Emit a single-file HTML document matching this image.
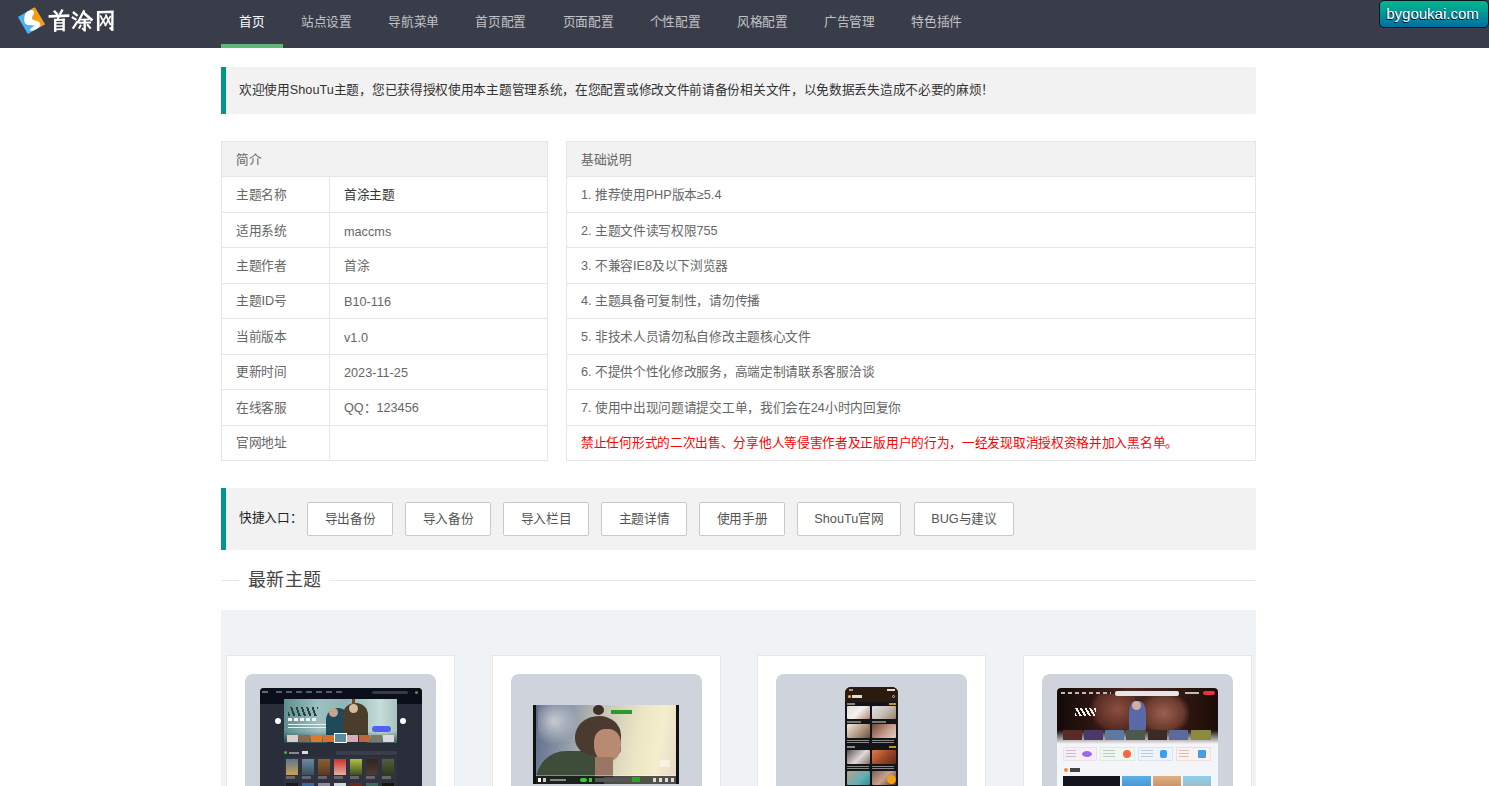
<!DOCTYPE html>
<html lang="zh-CN"><head><meta charset="utf-8">
<style>
*{margin:0;padding:0;box-sizing:border-box}
html,body{width:1489px;height:786px;overflow:hidden;background:#fff;font-family:"Liberation Sans",sans-serif;color:#666;font-size:12.7px;letter-spacing:-0.3px}
i{font-style:normal;letter-spacing:0}
.hd{position:absolute;left:0;top:0;width:1489px;height:48px;background:#393d49}
.logo{position:absolute;left:14px;top:4px;width:36px;height:34px}
.logotxt{position:absolute;left:46px;top:6px;width:72px;height:30px}
.nav{position:absolute;left:221px;top:0;height:48px;display:flex}
.nav a{display:block;padding:0 18.2px;line-height:44px;height:48px;color:rgba(255,255,255,.7);text-decoration:none;font-size:12.7px;position:relative}
.nav a.on{color:#fff}
.nav a.on:after{content:"";position:absolute;left:0;right:0;bottom:0;height:4px;background:#5fb878}
.badge{position:absolute;left:1379px;top:0;width:110px;height:28px;border:1px solid #06121e;border-radius:5px;background:linear-gradient(#00b88c,#006fa2);color:#fff;font-size:15px;line-height:25px;text-align:center;padding-right:3px;text-shadow:-0.5px 0.5px 0.5px #002}
.quote{position:absolute;left:221px;top:67px;width:1035px;height:47px;background:#f2f2f2;border-left:5px solid #009688;border-radius:0 2px 2px 0;padding-left:13px;line-height:46px;color:#333;font-size:12.7px}
table{position:absolute;border-collapse:collapse;font-size:12.7px}
td{border:1px solid #e6e6e6;height:35.44px;padding:0 0 2px 14px;color:#666}
tr.th td{background:#f2f2f2}
td.lt{padding-top:3px;padding-bottom:0}
.t1{left:221px;top:141px;width:327px}
.t2{left:566px;top:141px;width:690px}
.red{color:#f00 !important}
.quick{position:absolute;left:221px;top:488px;width:1035px;height:62px;background:#f2f2f2;border-left:5px solid #009688;border-radius:0 2px 2px 0}
.quick .lbl{position:absolute;left:13px;top:0;line-height:61px;color:#222;font-size:12.7px}
.btn{position:absolute;top:14px;height:34px;border:1px solid #c9c9c9;background:#fff;border-radius:2px;color:#555;text-align:center;line-height:32px;font-size:12.7px}
.fs{position:absolute;left:221px;top:580px;width:1035px;height:30px;border-top:1px solid #e6e6e6;border-radius:2px}
.fs span{position:absolute;left:18px;top:-12px;background:#fff;padding:0 8px 0 9px;font-size:18px;letter-spacing:0.4px;color:#444;line-height:22px}
.box{position:absolute;left:221px;top:610px;width:1035px;height:200px;background:#f0f3f6}
.card{position:absolute;top:45px;width:229px;height:200px;background:#fff;border:1px solid #e8e8e8}
.img{position:absolute;left:18px;top:18px;width:191px;height:160px;background:#cfd3db;border-radius:8px;overflow:hidden}

.img div{position:absolute}
.sc1{left:15px;top:14px;width:162px;height:120px;background:#2a2d3a;border-radius:4px 4px 0 0;overflow:hidden}
.sc1 .tb{left:0;top:0;width:162px;height:16px;background:#0b0e1b}
.sc1 .bn{left:24px;top:11px;width:113px;height:44px;background:linear-gradient(90deg,#5c8a8e 0%,#7fa9ab 18%,#2d5563 40%,#3f5a5a 55%,#8fb5b3 75%,#c3d9d6 100%)}
.p{width:12px;height:16px;top:71px}
.img>div>div{filter:blur(0.7px)}
.sc2{left:22px;top:31px;width:146px;height:79px;background:#111;overflow:hidden}
.sc3{left:69px;top:13px;width:53px;height:120px;background:#131418;border-radius:6px 6px 0 0;overflow:hidden}
.sc4{left:15px;top:14px;width:161px;height:120px;background:#f4f5f8;border-radius:4px 4px 0 0;overflow:hidden}
</style></head><body>
<div class="hd">
  <svg class="logo" viewBox="0 0 832 786"><defs><clipPath id="dm"><polygon points="480,75 715,470 320,695 90,300"/></clipPath></defs><g clip-path="url(#dm)"><rect width="832" height="786" fill="#4cb1f5"/><polygon points="360,120 520,40 760,470 600,560 560,420 420,360 440,200" fill="#ff9b08"/><path d="M270 200 C 300 160, 350 140, 400 140 C 450 140, 478 170, 462 215 C 445 260, 405 310, 420 345 C 440 375, 520 380, 570 405 C 620 440, 625 510, 560 560 C 510 595, 440 625, 390 615 C 355 605, 365 580, 400 555 C 440 530, 480 505, 470 495 C 430 488, 330 500, 270 460 C 225 420, 225 300, 270 200 Z" fill="#fff"/></g></svg>
  <svg class="logotxt" viewBox="0 0 1489 620" fill="none" stroke="#fff" stroke-linecap="square"><g stroke-width="49">
<path d="M180 115 L225 165"/><path d="M330 95 L295 160"/>
<path d="M80 215 L455 200" stroke-width="55"/>
<path d="M255 245 L235 285" stroke-width="41"/>
<path d="M190 290 L190 510"/><path d="M365 285 L365 500"/><path d="M190 290 L365 285" stroke-width="41"/>
<path d="M215 350 L340 350" stroke-width="31"/><path d="M215 415 L340 415" stroke-width="31"/><path d="M215 485 L340 480" stroke-width="36"/>
<path d="M575 140 L635 190"/><path d="M555 240 L610 275" stroke-width="46"/><path d="M565 450 L640 335" stroke-width="46"/>
<path d="M780 110 L670 320" stroke-width="46"/><path d="M790 150 L940 280" stroke-width="54"/>
<path d="M720 280 L880 275" stroke-width="36"/><path d="M690 345 L910 340" stroke-width="41"/>
<path d="M800 300 L800 500" stroke-width="49"/><path d="M800 500 L760 470" stroke-width="36"/>
<path d="M715 405 L690 450" stroke-width="41"/><path d="M865 395 L910 450" stroke-width="46"/>
<path d="M1080 130 L1080 490" stroke-width="54"/><path d="M1080 130 L1375 120 L1370 490" stroke-width="49"/><path d="M1370 490 L1330 460" stroke-width="41"/>
<path d="M1130 210 L1230 390" stroke-width="36"/><path d="M1230 230 L1125 400" stroke-width="36"/>
<path d="M1240 190 L1330 380" stroke-width="36"/><path d="M1330 220 L1230 400" stroke-width="36"/>
</g></svg>
  <div class="nav">
    <a class="on">首页</a><a>站点设置</a><a>导航菜单</a><a>首页配置</a><a>页面配置</a><a>个性配置</a><a>风格配置</a><a>广告管理</a><a>特色插件</a>
  </div>
  <div class="badge"><i>bygoukai.com</i></div>
</div>
<div class="quote">欢迎使用<i>ShouTu</i>主题，您已获得授权使用本主题管理系统，在您配置或修改文件前请备份相关文件，以免数据丢失造成不必要的麻烦！</div>
<table class="t1">
<tr class="th"><td colspan="2">简介</td></tr>
<tr><td style="width:108px">主题名称</td><td style="color:#333">首涂主题</td></tr>
<tr><td>适用系统</td><td class="lt"><i>maccms</i></td></tr>
<tr><td>主题作者</td><td>首涂</td></tr>
<tr><td>主题<i>ID</i>号</td><td class="lt"><i>B10-116</i></td></tr>
<tr><td>当前版本</td><td class="lt"><i>v1.0</i></td></tr>
<tr><td>更新时间</td><td class="lt"><i>2023-11-25</i></td></tr>
<tr><td>在线客服</td><td><i>QQ</i>：<i>123456</i></td></tr>
<tr><td>官网地址</td><td></td></tr>
</table>
<table class="t2">
<tr class="th"><td>基础说明</td></tr>
<tr><td><i>1.</i> 推荐使用<i>PHP</i>版本≥<i>5.4</i></td></tr>
<tr><td><i>2.</i> 主题文件读写权限<i>755</i></td></tr>
<tr><td><i>3.</i> 不兼容<i>IE8</i>及以下浏览器</td></tr>
<tr><td><i>4.</i> 主题具备可复制性，请勿传播</td></tr>
<tr><td><i>5.</i> 非技术人员请勿私自修改主题核心文件</td></tr>
<tr><td><i>6.</i> 不提供个性化修改服务，高端定制请联系客服洽谈</td></tr>
<tr><td><i>7.</i> 使用中出现问题请提交工单，我们会在<i>24</i>小时内回复你</td></tr>
<tr><td class="red">禁止任何形式的二次出售、分享他人等侵害作者及正版用户的行为，一经发现取消授权资格并加入黑名单。</td></tr>
</table>
<div class="quick">
  <div class="lbl">快捷入口：</div>
  <div class="btn" style="left:81px;width:86px">导出备份</div>
  <div class="btn" style="left:179px;width:86px">导入备份</div>
  <div class="btn" style="left:277px;width:86px">导入栏目</div>
  <div class="btn" style="left:375px;width:86px">主题详情</div>
  <div class="btn" style="left:473px;width:86px">使用手册</div>
  <div class="btn" style="left:571px;width:104px"><i>ShouTu</i>官网</div>
  <div class="btn" style="left:688px;width:100px"><i>BUG</i>与建议</div>
</div>
<div class="fs"><span>最新主题</span></div>
<div class="box">
  <div class="card" style="left:5px"><div class="img"><div class="sc1">
<div class="tb"><div style="left:2px;top:3px;width:6px;height:2px;background:#6a6d50"></div><div style="left:16px;top:3px;width:70px;height:2px;background:repeating-linear-gradient(90deg,#555a66 0 6px,transparent 6px 10px)"></div><div style="left:112px;top:3px;width:36px;height:3px;border-radius:2px;background:#383a44"></div><div style="left:155px;top:3px;width:3px;height:3px;background:#8a7a2a;border-radius:50%"></div></div>
<div class="bn"><div style="left:0;top:0;width:113px;height:44px;background:linear-gradient(90deg,#5f8d90 0%,#9cc0bf 30%,#8fb5b5 55%,#c6dcd8 85%,#a8c4c0 100%)"></div>
<div style="left:4px;top:8px;width:30px;height:9px;background:repeating-linear-gradient(70deg,#27403f 0 2px,transparent 2px 5px)"></div>
<div style="left:4px;top:19px;width:30px;height:3px;background:repeating-linear-gradient(90deg,#f4f4f4 0 4px,transparent 4px 6px)"></div>
<div style="left:4px;top:25px;width:40px;height:6px;background:repeating-linear-gradient(#e8f0f0 0 1px,transparent 1px 3px)"></div>
<div style="left:42px;top:9px;width:24px;height:35px;background:#1e4a5c;border-radius:12px 12px 2px 2px"></div><div style="left:45px;top:9px;width:9px;height:9px;background:#c7a48e;border-radius:50%"></div>
<div style="left:59px;top:4px;width:25px;height:40px;background:#4b3d2b;border-radius:12px 12px 2px 2px"></div><div style="left:65px;top:5px;width:9px;height:9px;background:#d7bc9c;border-radius:50%"></div><div style="left:68px;top:0;width:3px;height:5px;background:#6a4a2a"></div>
<div style="left:88px;top:27px;width:19px;height:6px;border-radius:3px;background:#4f60f2"></div>
<div style="left:0;top:32px;width:113px;height:12px;background:linear-gradient(rgba(20,40,45,0),rgba(20,40,45,.7))"></div>
<div style="left:3px;top:36px;width:11px;height:7px;background:#d8d0c8"></div><div style="left:15px;top:36px;width:11px;height:7px;background:#8a6a4a"></div><div style="left:27px;top:36px;width:11px;height:7px;background:#e0782a"></div><div style="left:39px;top:36px;width:11px;height:7px;background:#d8702a"></div><div style="left:51px;top:35px;width:11px;height:8px;background:#5a8aa0;outline:1px solid #fff"></div><div style="left:63px;top:36px;width:11px;height:7px;background:#d8a8c0"></div><div style="left:75px;top:36px;width:11px;height:7px;background:#b8683a"></div><div style="left:87px;top:36px;width:11px;height:7px;background:#7a7a68"></div><div style="left:99px;top:36px;width:11px;height:7px;background:#d8d8e0"></div>
</div>
<div style="left:15px;top:30px;width:6px;height:6px;border-radius:50%;background:#fff"></div><div style="left:140px;top:30px;width:6px;height:6px;border-radius:50%;background:#fff"></div>
<div style="left:24px;top:63px;width:3px;height:3px;background:#4caf50;border-radius:50%"></div><div style="left:29px;top:64px;width:10px;height:2px;background:#888"></div><div style="left:42px;top:63px;width:6px;height:3px;background:#ddd"></div>
<div style="left:76px;top:63px;width:61px;height:4px;background:#3a3d4a"></div>
<div style="left:24px;top:69px;width:113px;height:60px;background:#30333f"></div>
<div class="p" style="left:26px;background:linear-gradient(#5a7a90,#c9a050)"></div><div class="p" style="left:42px;background:linear-gradient(#6a8aa0,#3a5060)"></div><div class="p" style="left:58px;background:linear-gradient(#8a6030,#5a3a20)"></div><div class="p" style="left:74px;background:linear-gradient(#d03028,#e0b0a0)"></div><div class="p" style="left:90px;background:linear-gradient(#b0c040,#405020)"></div><div class="p" style="left:106px;background:linear-gradient(#302520,#503a30)"></div><div class="p" style="left:122px;background:linear-gradient(#506040,#303820)"></div>
<div style="left:26px;top:88px;width:108px;height:3px;background:repeating-linear-gradient(90deg,#64666e 0 9px,transparent 9px 16px)"></div>
<div class="p" style="top:95px;left:26px;background:#1a1a20"></div><div class="p" style="top:95px;left:42px;background:#3a6a9a"></div><div class="p" style="top:95px;left:58px;background:#8a8aa0"></div><div class="p" style="top:95px;left:74px;background:#d0d8e0"></div><div class="p" style="top:95px;left:90px;background:#6a2a1a"></div><div class="p" style="top:95px;left:106px;background:#3a6a5a"></div><div class="p" style="top:95px;left:122px;background:#1a1410"></div>
</div></div></div>
  <div class="card" style="left:271px"><div class="img"><div class="sc2">
<div style="left:3px;top:0;width:140px;height:79px;background:linear-gradient(100deg,#5a6a86 0%,#8a96a8 22%,#c8c4b8 45%,#ece6c4 70%,#f4eecc 85%,#e6d8c8 100%)"></div>
<div style="left:5px;top:0;width:40px;height:40px;background:radial-gradient(circle at 40% 40%,rgba(220,220,225,.8),rgba(220,220,225,0) 70%)"></div>
<div style="left:3px;top:46px;width:68px;height:33px;background:#3e4c3a;border-radius:30px 20px 0 0"></div>
<div style="left:42px;top:11px;width:46px;height:40px;background:#4a3a30;border-radius:60% 55% 20% 50%"></div>
<div style="left:61px;top:24px;width:27px;height:33px;background:#b88a72;border-radius:40% 45% 50% 50%"></div>
<div style="left:62px;top:52px;width:18px;height:20px;background:#9a7664"></div>
<div style="left:60px;top:0;width:11px;height:10px;background:#3a3028;border-radius:50%"></div>
<div style="left:78px;top:5px;width:21px;height:4px;background:#2a9a2a"></div>
<div style="left:127px;top:55px;width:10px;height:7px;background:rgba(255,255,255,.45);border-radius:1px"></div>
<div style="left:3px;top:70px;width:140px;height:1px;background:rgba(255,255,255,.35)"></div>
<div style="left:3px;top:71px;width:140px;height:8px;background:rgba(15,15,15,.7)"></div>
<div style="left:5px;top:73px;width:3px;height:4px;background:#fff"></div><div style="left:10px;top:73px;width:3px;height:4px;background:#ccc"></div><div style="left:17px;top:74px;width:16px;height:2px;background:#888"></div>
<div style="left:47px;top:73px;width:7px;height:4px;background:#3c3;border-radius:2px"></div><div style="left:56px;top:73px;width:3px;height:4px;background:#3c3"></div>
<div style="left:62px;top:73px;width:40px;height:4px;background:#555"></div><div style="left:99px;top:72px;width:8px;height:5px;background:#2a2"></div>
<div style="left:120px;top:73px;width:22px;height:4px;background:repeating-linear-gradient(90deg,#ddd 0 3px,transparent 3px 6px)"></div>
</div></div></div>
  <div class="card" style="left:536px"><div class="img"><div class="sc3">
<div style="left:0;top:0;width:53px;height:15px;background:#2b1a0e"></div>
<div style="left:42px;top:2px;width:8px;height:2px;background:#ddd"></div><div style="left:4px;top:2px;width:4px;height:2px;background:#999"></div>
<div style="left:3px;top:8px;width:3px;height:3px;border-radius:50%;background:#f0c020"></div><div style="left:7px;top:8px;width:10px;height:3px;background:#ddd"></div><div style="left:47px;top:8px;width:3px;height:3px;border:1px solid #bbb;border-radius:50%"></div>
<div style="left:2px;top:16px;width:8px;height:2px;background:#888"></div><div style="left:44px;top:16px;width:7px;height:2px;background:#d09020"></div>
<div style="left:2px;top:19px;width:23px;height:13px;border-radius:1px;background:linear-gradient(135deg,#e8e0d8,#f4f0ec 50%,#a88870)"></div><div style="left:27px;top:19px;width:24px;height:13px;border-radius:1px;background:linear-gradient(135deg,#e0e0e4,#c8c0b8 50%,#988070)"></div>
<div style="left:2px;top:34px;width:14px;height:2px;background:#777"></div><div style="left:27px;top:34px;width:14px;height:2px;background:#777"></div>
<div style="left:2px;top:37px;width:23px;height:14px;border-radius:1px;background:linear-gradient(135deg,#f0e8e0,#b8a088 50%,#6a5040)"></div><div style="left:27px;top:37px;width:24px;height:14px;border-radius:1px;background:linear-gradient(135deg,#704838,#c8a090 60%,#e0d0c8)"></div>
<div style="left:2px;top:53px;width:22px;height:4px;background:repeating-linear-gradient(#888 0 1px,transparent 1px 2px)"></div><div style="left:27px;top:53px;width:22px;height:4px;background:repeating-linear-gradient(#888 0 1px,transparent 1px 2px)"></div>
<div style="left:2px;top:59px;width:8px;height:2px;background:#888"></div><div style="left:44px;top:59px;width:7px;height:2px;background:#d09020"></div>
<div style="left:2px;top:63px;width:23px;height:14px;border-radius:1px;background:linear-gradient(135deg,#605050,#e0d8d8 55%,#807068)"></div><div style="left:27px;top:63px;width:24px;height:14px;border-radius:1px;background:linear-gradient(135deg,#e08048,#a04828 50%,#602818)"></div>
<div style="left:2px;top:79px;width:22px;height:4px;background:repeating-linear-gradient(#888 0 1px,transparent 1px 2px)"></div><div style="left:27px;top:79px;width:22px;height:4px;background:repeating-linear-gradient(#888 0 1px,transparent 1px 2px)"></div>
<div style="left:2px;top:84px;width:23px;height:14px;border-radius:1px;background:linear-gradient(135deg,#c0a088,#60b0b8 60%,#3a8a90)"></div><div style="left:27px;top:84px;width:24px;height:14px;border-radius:1px;background:linear-gradient(135deg,#806050,#c8a090 50%,#503028)"></div>
<div style="left:42px;top:88px;width:9px;height:9px;border-radius:50%;background:#f0a010"></div>
</div></div></div>
  <div class="card" style="left:802px"><div class="img"><div class="sc4">
<div style="left:0;top:0;width:161px;height:56px;background:linear-gradient(90deg,#140a08 0%,#2a1410 20%,#4a2820 45%,#3a1c14 70%,#1a0c08 100%)"></div>
<div style="left:34px;top:6px;width:44px;height:38px;background:radial-gradient(ellipse at 60% 40%,#8a5040,#5a2c22 60%,rgba(60,28,20,0) 75%)"></div>
<div style="left:86px;top:8px;width:46px;height:38px;background:radial-gradient(ellipse at 45% 45%,#9a6050,#6a3a2c 55%,rgba(60,28,20,0) 75%)"></div>
<div style="left:72px;top:13px;width:17px;height:30px;background:#5a6aa8;border-radius:40% 40% 10% 10%"></div><div style="left:75px;top:13px;width:9px;height:9px;background:#d0b0a0;border-radius:50%"></div>
<div style="left:18px;top:20px;width:21px;height:8px;background:repeating-linear-gradient(60deg,#eee 0 2px,transparent 2px 4px)"></div>
<div style="left:0;top:42px;width:161px;height:14px;background:linear-gradient(rgba(244,245,248,0),#f4f5f8)"></div>
<div style="left:4px;top:4px;width:50px;height:2px;background:repeating-linear-gradient(90deg,#bbb 0 4px,transparent 4px 7px)"></div>
<div style="left:58px;top:3px;width:64px;height:5px;background:#e6e6e6;border-radius:2px"></div><div style="left:128px;top:4px;width:14px;height:2px;background:#bbb"></div><div style="left:146px;top:3px;width:12px;height:4px;background:#e83040;border-radius:2px"></div>
<div style="left:6px;top:42px;width:19px;height:10px;background:#5a2a28"></div><div style="left:27px;top:42px;width:19px;height:10px;background:#4a3a6a"></div><div style="left:48px;top:42px;width:19px;height:10px;background:#5a7aa0"></div><div style="left:69px;top:42px;width:19px;height:10px;background:#4a5a50"></div><div style="left:91px;top:42px;width:19px;height:10px;background:#3a2a28"></div><div style="left:112px;top:42px;width:19px;height:10px;background:#5a6a9a"></div><div style="left:134px;top:42px;width:20px;height:10px;background:#8a8a40"></div>
<div style="left:6px;top:59px;width:34px;height:14px;background:#f8eef8;border:1px solid #ece0ec"></div><div style="left:43px;top:59px;width:35px;height:14px;background:#eef8f0;border:1px solid #dcecdf"></div><div style="left:81px;top:59px;width:35px;height:14px;background:#eef4fb;border:1px solid #d8e4f0"></div><div style="left:119px;top:59px;width:35px;height:14px;background:#fdf1ee;border:1px solid #f0dcd8"></div>
<div style="left:9px;top:62px;width:10px;height:8px;background:repeating-linear-gradient(#c8c0c8 0 1px,transparent 1px 3px)"></div><div style="left:46px;top:62px;width:12px;height:8px;background:repeating-linear-gradient(#c0c8c0 0 1px,transparent 1px 3px)"></div><div style="left:84px;top:62px;width:12px;height:8px;background:repeating-linear-gradient(#c0c8d0 0 1px,transparent 1px 3px)"></div><div style="left:122px;top:62px;width:10px;height:8px;background:repeating-linear-gradient(#d0c0c0 0 1px,transparent 1px 3px)"></div>
<div style="left:25px;top:63px;width:10px;height:6px;background:#9a6ae8;border-radius:50%"></div><div style="left:66px;top:62px;width:8px;height:8px;background:#f06a4a;border-radius:50%"></div><div style="left:103px;top:62px;width:7px;height:8px;background:#3aa0f0;border-radius:2px"></div><div style="left:141px;top:62px;width:8px;height:8px;background:#40a0e0;border-radius:1px"></div>
<div style="left:7px;top:80px;width:4px;height:4px;border-radius:50%;background:#f08a30"></div><div style="left:13px;top:80px;width:10px;height:4px;background:#444"></div>
<div style="left:6px;top:88px;width:57px;height:32px;background:#14141c"></div><div style="left:65px;top:88px;width:29px;height:32px;background:linear-gradient(#5ab0e8,#3060a0)"></div><div style="left:96px;top:88px;width:28px;height:32px;background:linear-gradient(#e0b080,#a05040)"></div><div style="left:126px;top:88px;width:28px;height:32px;background:linear-gradient(#8ad0f0,#d09060)"></div>
</div></div></div>
</div>
</body></html>
